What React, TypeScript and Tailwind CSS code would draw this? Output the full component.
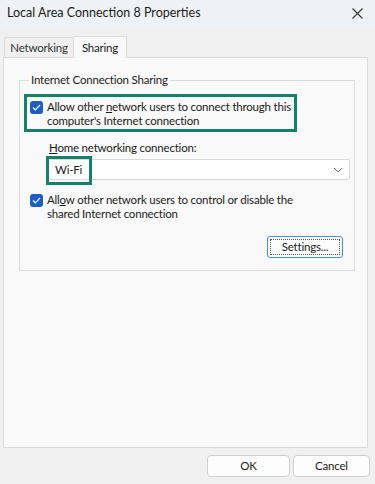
export default function App() {
  return (
    <div className="w-[375px] h-[484px] bg-[#f0f0f0] flex flex-col text-[#1b1b1b] font-['Lato',sans-serif] text-[11.5px] tracking-[-0.2px] overflow-hidden">
      {/* Title bar */}
      <div className="h-[27px] bg-[#eef2f7] flex items-center justify-between pl-[7px] pr-[12px] shrink-0">
        <span className="text-[12.5px] leading-none tracking-normal">Local Area Connection 8 Properties</span>
        <svg width="11" height="11" viewBox="0 0 11 11" className="text-[#333]">
          <path d="M0.5 0.5L10.5 10.5M10.5 0.5L0.5 10.5" stroke="currentColor" strokeWidth="1.1" />
        </svg>
      </div>

      {/* Tabs */}
      <div className="flex items-end pl-[4px] mt-[8px] h-[22px] relative z-10">
        <div className="h-[20px] w-[70px] border border-b-0 border-[#dcdcdc] bg-[#f0f0f0] flex items-center justify-center text-[#333]">
          Networking
        </div>
        <div className="h-[22px] w-[53px] border border-b-0 border-l-0 border-[#dcdcdc] bg-[#f9f9f9] flex items-center justify-center -mb-px">
          Sharing
        </div>
      </div>

      {/* Panel */}
      <div className="ml-[3px] mr-[7px] h-[391px] border border-[#dcdcdc] bg-[#f9f9f9] pt-[14px] pl-[15px] pr-[12px]">
        <fieldset className="border border-[#dcdcdc] h-[199px] pl-[4px]">
          <legend className="ml-[5px] px-[2px] leading-[16px]">Internet Connection Sharing</legend>

          <div className="mt-[6px] w-[273px] border-[3px] border-[#15806b] flex items-start gap-[4px] pl-[3px] pt-[3px] pb-[2px]">
            <Check />
            <p className="leading-[13.5px] whitespace-nowrap">
              Allow other <span className="underline">n</span>etwork users to connect through this
              <br />
              computer's Internet connection
            </p>
          </div>

          <div className="pl-[25px] mt-[8px]">
            <p className="leading-[16px]">
              <span className="underline">H</span>ome networking connection:
            </p>
            <div className="relative mt-[3px] h-[21px] w-[302px] -ml-[1px] bg-white border border-[#d9d9d9] rounded-[2px] flex items-center justify-between pl-[6px] pr-[6px]">
              <span>Wi-Fi</span>
              <svg width="10" height="6" viewBox="0 0 10 6">
                <path d="M1 1L5 5L9 1" fill="none" stroke="#777" strokeWidth="1" />
              </svg>
              <div className="absolute -left-[3px] -top-[4px] w-[46px] h-[29px] border-[3px] border-[#15806b]" />
            </div>
          </div>

          <div className="mt-[13px] flex items-start gap-[4px] pl-[6px]">
            <Check />
            <p className="leading-[13.5px] whitespace-nowrap">
              All<span className="underline">o</span>w other network users to control or disable the
              <br />
              shared Internet connection
            </p>
          </div>

          <div className="flex justify-end pr-[11px] mt-[16px]">
            <button className="h-[22px] w-[76px] bg-[#fdfdfd] border border-[#4a8fd9] rounded-[3px] p-[2px]">
              <span className="flex h-full w-full items-center justify-center border border-dotted border-[#555]">
                Settings...
              </span>
            </button>
          </div>
        </fieldset>
      </div>

      {/* Buttons */}
      <div className="flex justify-end gap-[3px] pr-[5px] mt-[7px]">
        <button className="h-[22px] w-[83px] bg-[#fdfdfd] border border-[#d0d0d0] rounded-[4px]">OK</button>
        <button className="h-[22px] w-[77px] bg-[#fdfdfd] border border-[#d0d0d0] rounded-[4px]">Cancel</button>
      </div>
    </div>
  );
}

function Check() {
  return (
    <span className="mt-[1px] w-[13px] h-[13px] shrink-0 rounded-[3px] bg-[#1c5fc4] flex items-center justify-center">
      <svg width="9" height="7" viewBox="0 0 9 7">
        <path d="M1 3.5L3.3 5.8L8 1" fill="none" stroke="white" strokeWidth="1.2" />
      </svg>
    </span>
  );
}
